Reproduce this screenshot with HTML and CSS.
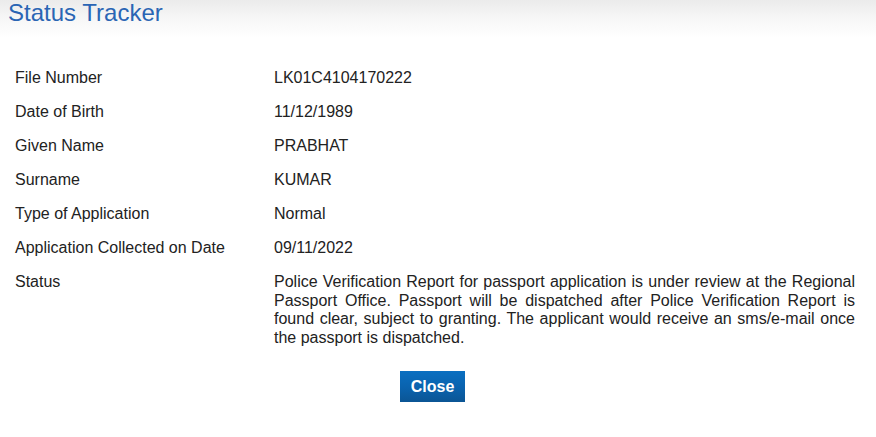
FILE: index.html
```html
<!DOCTYPE html>
<html>
<head>
<meta charset="utf-8">
<link rel="stylesheet" href="styles.css">
</head>
<body>
<div class="header">
  <h1 class="title">Status Tracker</h1>
</div>
<div class="details">
  <div class="label">File Number</div><div class="value">LK01C4104170222</div>
  <div class="label">Date of Birth</div><div class="value">11/12/1989</div>
  <div class="label">Given Name</div><div class="value">PRABHAT</div>
  <div class="label">Surname</div><div class="value">KUMAR</div>
  <div class="label">Type of Application</div><div class="value">Normal</div>
  <div class="label">Application Collected on Date</div><div class="value">09/11/2022</div>
  <div class="label">Status</div><div class="value status">Police Verification Report for passport application is under review at the Regional Passport Office. Passport will be dispatched after Police Verification Report is found clear, subject to granting. The applicant would receive an sms/e-mail once the passport is dispatched.</div>
</div>
<div class="actions">
  <button class="btn">Close</button>
</div>
</body>
</html>
```
FILE: styles.css
```css
html, body {
  margin: 0;
  padding: 0;
  background: #fff;
}
body {
  font-family: "Liberation Sans", Arial, sans-serif;
  color: #222;
  width: 876px;
}
.header {
  height: 38px;
  padding-left: 8px;
  background: linear-gradient(to bottom, #ebebeb 0%, #f7f7f7 50%, #ffffff 100%);
}
.title {
  margin: 0;
  font-size: 24px;
  line-height: 26px;
  font-weight: normal;
  color: #2a65b4;
}
.details {
  display: grid;
  grid-template-columns: 259px 581px;
  padding: 23px 0 0 15px;
  font-size: 16px;
  line-height: 18px;
}
.label, .value {
  padding: 8px 0;
}
.status {
  text-align: justify;
  line-height: 18.5px;
}
.actions {
  display: flex;
  justify-content: center;
  width: 835px;
  padding-left: 15px;
  margin-top: 16px;
}
.btn {
  height: 31px;
  padding: 0 11px;
  border: none;
  border-radius: 0;
  background: linear-gradient(to bottom, #0a6fc1 0%, #0a62ad 55%, #0b5594 100%);
  color: #fff;
  font-family: "Liberation Sans", Arial, sans-serif;
  font-size: 16px;
  font-weight: bold;
  cursor: pointer;
}
```
